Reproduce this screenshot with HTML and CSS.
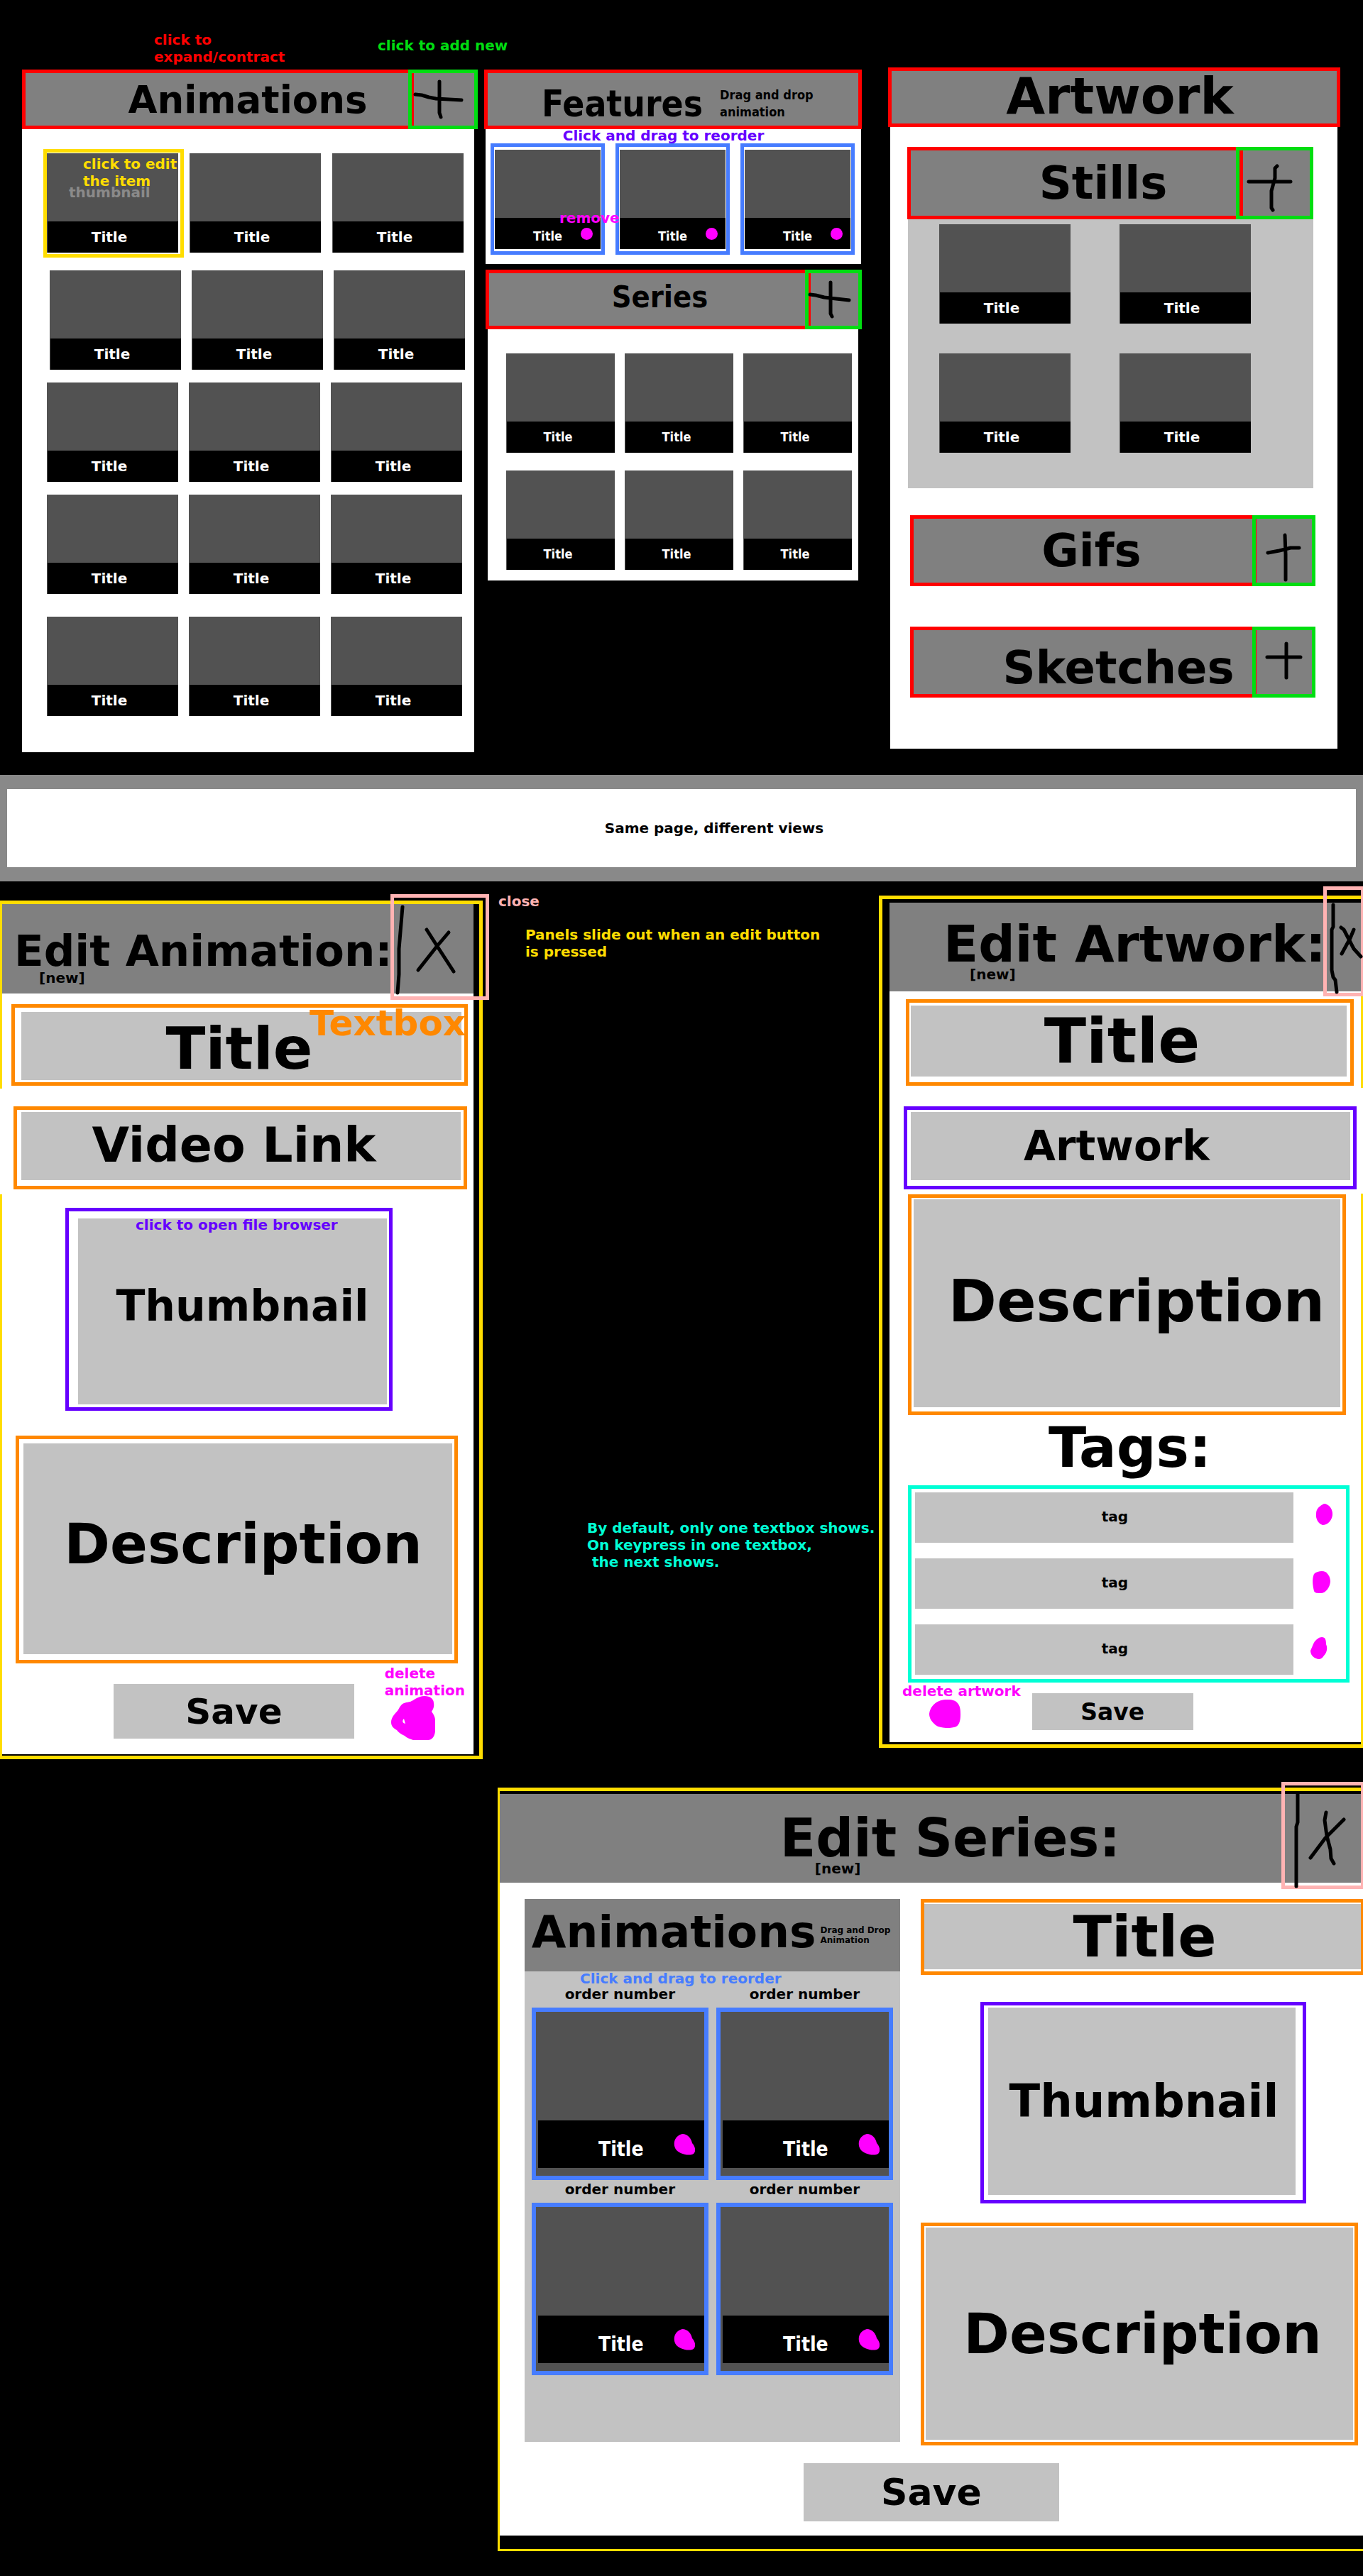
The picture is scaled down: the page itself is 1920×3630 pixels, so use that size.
FILE: index.html
```html
<!DOCTYPE html>
<html lang="en">
<head>
<meta charset="utf-8">
<title>Portfolio admin wireframe</title>
<link rel="stylesheet" href="styles.css">
</head>
<body>
<main>
  <section class="shelves">
    <div class="shelf shelf-animations">
      <p class="note note-expand">click to<br>expand/contract</p>
      <p class="note note-add">click to add new</p>
      <header class="bar">
        <h2 class="bar-heading"><button class="bar-title">Animations</button></h2>
        <button class="add" aria-label="Add animation"><svg class="ink"><path d="M39 12V56L41 62M5 30L14 31L24 34L34 36L70 38"/></svg></button>
      </header>
      <div class="shelf-body">
        <div class="row row-spread">
          <button class="card card-edit">
            <span class="thumb"></span><span class="name">Title</span>
            <span class="note note-thumb">thumbnail</span>
            <span class="note note-edit">click to edit<br>the item</span>
          </button>
          <button class="card"><span class="thumb"></span><span class="name">Title</span></button>
          <button class="card"><span class="thumb"></span><span class="name">Title</span></button>
        </div>
        <div class="row row-shift">
          <button class="card"><span class="thumb"></span><span class="name">Title</span></button>
          <button class="card"><span class="thumb"></span><span class="name">Title</span></button>
          <button class="card"><span class="thumb"></span><span class="name">Title</span></button>
        </div>
        <div class="row">
          <button class="card"><span class="thumb"></span><span class="name">Title</span></button>
          <button class="card"><span class="thumb"></span><span class="name">Title</span></button>
          <button class="card"><span class="thumb"></span><span class="name">Title</span></button>
        </div>
        <div class="row row-far">
          <button class="card"><span class="thumb"></span><span class="name">Title</span></button>
          <button class="card"><span class="thumb"></span><span class="name">Title</span></button>
          <button class="card"><span class="thumb"></span><span class="name">Title</span></button>
        </div>
        <div class="row row-last">
          <button class="card"><span class="thumb"></span><span class="name">Title</span></button>
          <button class="card"><span class="thumb"></span><span class="name">Title</span></button>
          <button class="card"><span class="thumb"></span><span class="name">Title</span></button>
        </div>
      </div>
    </div>

    <div class="shelf shelf-middle">
      <section>
        <h2 class="bar-heading"><button class="bar-title features-title"><span class="features-name">Features</span><span class="features-hint">Drag and drop<br>animation</span></button></h2>
        <div class="features-body">
          <p class="reorder">Click and drag to reorder</p>
          <div class="features-row">
            <div class="drag">
              <div class="card"><span class="thumb"></span><span class="name">Title</span></div>
              <button class="dot" aria-label="Remove"></button>
              <span class="note note-remove">remove</span>
            </div>
            <div class="drag">
              <div class="card"><span class="thumb"></span><span class="name">Title</span></div>
              <button class="dot" aria-label="Remove"></button>
            </div>
            <div class="drag">
              <div class="card"><span class="thumb"></span><span class="name">Title</span></div>
              <button class="dot" aria-label="Remove"></button>
            </div>
          </div>
        </div>
      </section>
      <section class="series">
        <header class="bar">
          <h2 class="bar-heading"><button class="bar-title series-title">Series</button></h2>
          <button class="add add-series" aria-label="Add series"><svg class="ink"><path d="M31 13V57L33 61M2 30L10 31L22 34L30 35L57 38"/></svg></button>
        </header>
        <div class="series-body">
          <button class="card"><span class="thumb"></span><span class="name">Title</span></button>
          <button class="card"><span class="thumb"></span><span class="name">Title</span></button>
          <button class="card"><span class="thumb"></span><span class="name">Title</span></button>
          <button class="card"><span class="thumb"></span><span class="name">Title</span></button>
          <button class="card"><span class="thumb"></span><span class="name">Title</span></button>
          <button class="card"><span class="thumb"></span><span class="name">Title</span></button>
        </div>
      </section>
    </div>

    <div class="shelf shelf-artwork">
      <h2 class="bar-heading"><button class="bar-title artwork-title">Artwork</button></h2>
      <div class="artwork-body">
        <section class="stills">
          <header class="bar">
            <h3 class="bar-heading"><button class="bar-title stills-title">Stills</button></h3>
            <button class="add add-stills" aria-label="Add still"><svg class="ink"><path d="M53 22L50 25V39L45 57V81L47 84M13 44H72"/></svg></button>
          </header>
          <div class="stills-body">
            <button class="card"><span class="thumb"></span><span class="name">Title</span></button>
            <button class="card"><span class="thumb"></span><span class="name">Title</span></button>
            <button class="card"><span class="thumb"></span><span class="name">Title</span></button>
            <button class="card"><span class="thumb"></span><span class="name">Title</span></button>
          </div>
        </section>
        <header class="bar bar-folded">
          <h3 class="bar-heading"><button class="bar-title gifs-title">Gifs</button></h3>
          <button class="add add-folded" aria-label="Add gif"><svg class="ink"><path d="M41 23L42 50V86M17 48L33 45L49 41H61"/></svg></button>
        </header>
        <header class="bar bar-folded">
          <h3 class="bar-heading"><button class="bar-title sketches-title">Sketches</button></h3>
          <button class="add add-folded" aria-label="Add sketch"><svg class="ink"><path d="M43 19V67M16 38H63"/></svg></button>
        </header>
      </div>
    </div>
  </section>

  <p class="divider">Same page, different views</p>

  <section class="editors">
    <form class="panel panel-animation">
      <header class="panel-head">
        <h2>Edit Animation:</h2>
        <p>[new]</p>
        <button type="button" class="close" aria-label="Close"><svg class="ink"><path d="M12 13L7 72V108L5 134M46 45L60 67L84 104M77 49L60 69L34 102"/></svg></button>
      </header>
      <div class="panel-body">
        <div class="field a-title"><input type="text" value="Title" aria-label="Title"><span class="note note-textbox">Textbox</span></div>
        <div class="field a-video"><input type="text" value="Video Link" aria-label="Video link"></div>
        <div class="field field-file a-thumb"><button type="button">Thumbnail</button><span class="note note-file">click to open file browser</span></div>
        <div class="field a-description"><textarea aria-label="Description">Description</textarea></div>
        <footer class="a-footer">
          <button type="button" class="save">Save</button>
          <button type="button" class="delete">delete<br>animation
            <svg width="62" height="62" viewBox="0 0 62 62"><path fill-rule="evenodd" d="M47 0C55 0 60 4 60 10C61 15 59 19 57 22C60 26 62 30 62 34V50C61 58 57 62 52 62H31C26 60 22 59 19 56C13 53 10 51 8 48C2 45 0 41 0 37C0 31 4 26 8 22C11 19 11 16 14 13C17 9 22 9 27 8C32 6 38 0 47 0ZM18 32C15 35 16 38 20 39Z"/></svg>
          </button>
        </footer>
      </div>
    </form>

    <div class="remarks">
      <p class="remark-close">close</p>
      <p class="remark-slide">Panels slide out when an edit button<br>is pressed</p>
      <p class="remark-tags">By default, only one textbox shows.<br>On keypress in one textbox,<br>&nbsp;the next shows.</p>
    </div>

    <form class="panel panel-artwork">
      <header class="panel-head">
        <h2>Edit Artwork:</h2>
        <p>[new]</p>
        <button type="button" class="close" aria-label="Close"><svg class="ink"><path d="M9 21V52L7 56V113L9 123L12 127L14 144M20 53L24 56L38 83L48 94M38 56L33 68L21 90"/></svg></button>
      </header>
      <div class="panel-body">
        <div class="field w-title"><input type="text" value="Title" aria-label="Title"></div>
        <div class="field field-file w-file"><button type="button">Artwork</button></div>
        <div class="field w-description"><textarea aria-label="Description">Description</textarea></div>
        <h3 class="tags-heading">Tags:</h3>
        <ul class="tags">
          <li><input type="text" value="tag" aria-label="Tag 1"><button type="button" aria-label="Delete tag 1"><svg width="74" height="71"><path d="M43 16C50 16 56 24 55 32C54 40 48 46 41 46C35 44 31 37 32 30C32 23 37 19 43 16Z"/></svg></button></li>
          <li><input type="text" value="tag" aria-label="Tag 2"><button type="button" aria-label="Delete tag 2"><svg width="74" height="71"><path d="M40 18C48 18 52 26 52 33C51 41 46 49 38 49C34 49 30 49 29 46C27 38 26 29 29 22C32 19 36 18 40 18Z"/></svg></button></li>
          <li><input type="text" value="tag" aria-label="Tag 3"><button type="button" aria-label="Delete tag 3"><svg width="74" height="71"><path d="M40 18C45 18 46 22 46 28C49 35 46 41 43 44C40 49 36 50 32 48C27 46 24 42 24 37C26 33 27 29 30 24C33 21 36 18 40 18Z"/></svg></button></li>
        </ul>
        <footer class="w-footer">
          <button type="button" class="delete">delete artwork
            <svg width="44" height="40" viewBox="0 0 44 40"><path d="M14 2C21-1 32-1 38 3C44 8 44 15 44 21C44 28 43 35 38 38C31 41 16 41 9 36C3 31 0 26 0 20C1 12 6 5 14 2Z"/></svg>
          </button>
          <button type="button" class="save">Save</button>
        </footer>
      </div>
    </form>
  </section>

  <form class="panel panel-series">
    <header class="panel-head">
      <h2>Edit Series:</h2>
      <p>[new]</p>
      <button type="button" class="close" aria-label="Close"><svg class="ink"><path d="M18 12V52L16 58V142M83 48L57 74L36 102M58 38L56 49L59 71L64 90L65 103L69 110"/></svg></button>
    </header>
    <div class="panel-body">
      <div class="series-columns">
        <section class="picker">
          <header class="picker-head">
            <h3>Animations</h3>
            <p>Drag and Drop<br>Animation</p>
          </header>
          <p class="picker-note">Click and drag to reorder</p>
          <div class="picker-grid">
            <figure>
              <figcaption>order number</figcaption>
              <div class="tile"><span class="tile-name">Title<button type="button" class="blob" aria-label="Remove"><svg width="30" height="30"><path d="M12 0C20 0 25 7 26 13C31 18 32 27 26 29C17 31 8 27 4 23C-2 16 0 3 12 0Z"/></svg></button></span></div>
            </figure>
            <figure>
              <figcaption>order number</figcaption>
              <div class="tile"><span class="tile-name">Title<button type="button" class="blob" aria-label="Remove"><svg width="30" height="30"><path d="M12 0C20 0 25 7 26 13C31 18 32 27 26 29C17 31 8 27 4 23C-2 16 0 3 12 0Z"/></svg></button></span></div>
            </figure>
            <figure>
              <figcaption>order number</figcaption>
              <div class="tile"><span class="tile-name">Title<button type="button" class="blob" aria-label="Remove"><svg width="30" height="30"><path d="M12 0C20 0 25 7 26 13C31 18 32 27 26 29C17 31 8 27 4 23C-2 16 0 3 12 0Z"/></svg></button></span></div>
            </figure>
            <figure>
              <figcaption>order number</figcaption>
              <div class="tile"><span class="tile-name">Title<button type="button" class="blob" aria-label="Remove"><svg width="30" height="30"><path d="M12 0C20 0 25 7 26 13C31 18 32 27 26 29C17 31 8 27 4 23C-2 16 0 3 12 0Z"/></svg></button></span></div>
            </figure>
          </div>
        </section>
        <div class="series-fields">
          <div class="field s-title"><input type="text" value="Title" aria-label="Title"></div>
          <div class="field field-file s-thumb"><button type="button">Thumbnail</button></div>
          <div class="field s-description"><textarea aria-label="Description">Description</textarea></div>
        </div>
      </div>
      <button type="button" class="save">Save</button>
    </div>
  </form>
</main>
</body>
</html>
```
FILE: styles.css
```css
:root {
  --red: #ff0000;
  --green: #00dd11;
  --yellow: #ffdd00;
  --orange: #ff8800;
  --purple: #6600ff;
  --blue: #467cff;
  --pink: #ffb3b3;
  --magenta: #ff00ff;
  --aqua: #00ffd5;
  --bar: #808080;
  --fill: #c2c2c2;
  --thumb: #525252;
  --condensed: "DejaVu Sans Condensed", "DejaVu Sans", sans-serif;
}

* { box-sizing: border-box; }

body {
  margin: 0;
  background: #000;
  color: #000;
  font: bold 20px/24px "DejaVu Sans", Verdana, sans-serif;
  overflow-x: hidden;
}

h2, h3, p, ul, figure { margin: 0; padding: 0; font-size: inherit; font-weight: bold; }
ul { list-style: none; }

button, input, textarea {
  display: block;
  margin: 0;
  padding: 0;
  border: 0;
  border-radius: 0;
  background: none;
  color: inherit;
  font: inherit;
}

svg { display: block; }

/* Hand-drawn strokes that lie over their button */
.ink {
  position: absolute;
  inset: 0;
  width: 100%;
  height: 100%;
  overflow: visible;
  fill: none;
  stroke: #000;
  stroke-width: 5;
  stroke-linecap: round;
  stroke-linejoin: round;
}

.note { position: absolute; z-index: 2; text-align: left; white-space: nowrap; }

/* Shelves */
.shelves {
  display: flex;
  align-items: flex-start;
  gap: 9px;
  padding: 95px 32px 32px 31px;
}
.shelf { position: relative; min-width: 0; }
.shelf-animations { flex: 642 1 0; margin-top: 3px; }
.shelf-middle { flex: 532 1 0; margin-top: 3px; }
.shelf-artwork { flex: 637 1 0; margin-left: 28px; }

.note-expand { left: 186px; top: -54px; color: var(--red); }
.note-add { left: 501px; top: -46px; color: var(--green); }

.bar { display: flex; background: var(--bar); }
.bar-heading { flex: 1; min-width: 0; }
.bar-title {
  width: 100%;
  height: 84px;
  border: 5px solid var(--red);
  background: var(--bar);
  font-size: 53px;
  line-height: 1;
  text-align: center;
}
.shelf-animations .bar-title { padding-left: 84px; }
.add {
  position: relative;
  flex: none;
  width: 98px;
  margin-left: -8px;
  border: 5px solid var(--green);
}

.shelf-body { margin-right: 5px; padding: 34px 17px 51px 35px; background: #fff; }
.row { display: grid; grid-template-columns: repeat(3, 1fr); gap: 15px; margin-bottom: 18px; }
.row-spread { gap: 16px; margin-right: -2px; margin-bottom: 25px; }
.row-shift { margin-left: 4px; margin-right: -4px; }
.row-far { margin-bottom: 32px; }
.row-last { margin-bottom: 0; }

.card { position: relative; display: block; color: #fff; text-align: center; }
.thumb { display: block; height: 96px; background: var(--thumb); }
.name {
  display: flex;
  align-items: center;
  justify-content: center;
  height: 44px;
  padding-right: 10px;
  border-left: 1px solid var(--thumb);
  background: #000;
}
.card-edit::after {
  content: "";
  position: absolute;
  inset: -6px -8px -7px -5px;
  border: 5px solid var(--yellow);
}
.note-edit { left: 51px; top: 3px; color: var(--yellow); }
.note-thumb { left: 31px; top: 43px; color: #8a8a8a; }

/* Features and series */
.features-title {
  display: flex;
  align-items: center;
  gap: 24px;
  padding: 12px 0 0 76px;
  font-family: var(--condensed);
  text-align: left;
}
.features-name { font-size: 51px; }
.features-hint { font-size: 18px; line-height: 24px; }
.features-body { margin: 0 1px 0 2px; padding: 0 9px 13px 7px; background: #fff; }
.reorder { padding: 0 26px 2px 0; color: var(--purple); line-height: 18px; text-align: center; }
.features-row { display: grid; grid-template-columns: repeat(3, 1fr); gap: 15px; }
.drag { position: relative; padding: 4px 1px 3px; border: 5px solid var(--blue); }
.drag .name { padding: 8px 0 0; border-left: 0; font: bold 18px/24px var(--condensed); }
.dot {
  position: absolute;
  right: 12px;
  bottom: 16px;
  width: 17px;
  height: 17px;
  border-radius: 50%;
  background: var(--magenta);
}
.note-remove { left: 92px; top: 88px; color: var(--magenta); }

.series { margin: 8px 0 0 2px; }
.series-title { padding: 0 0 8px 33px; font: bold 43px/1 var(--condensed); }
.add-series { width: 80px; }
.series-body {
  display: grid;
  grid-template-columns: repeat(3, 1fr);
  gap: 25px 14px;
  margin: 0 5px 0 3px;
  padding: 34px 9px 15px 26px;
  background: #fff;
}
.series-body .name { padding-right: 8px; font: bold 18px/24px var(--condensed); }

/* Artwork */
.artwork-title { padding: 0 0 4px 16px; font-size: 71px; }
.artwork-body { margin: 0 4px 0 3px; padding: 28px 31px 72px 28px; background: #fff; }
.stills { margin: 0 3px 0 -4px; }
.stills-title { height: 102px; padding-left: 79px; font-size: 64px; }
.add-stills { width: 109px; margin-left: -10px; }
.stills-body {
  display: grid;
  grid-template-columns: 1fr 1fr;
  gap: 42px 69px;
  margin-left: 1px;
  padding: 7px 88px 50px 44px;
  background: var(--fill);
}
.bar-folded { margin-top: 38px; }
.bar-folded + .bar-folded { margin-top: 57px; }
.bar-folded .bar-title { height: 100px; font-size: 64px; }
.bar-folded .gifs-title { padding-left: 23px; }
.bar-folded .sketches-title { padding: 15px 0 0 99px; }
.add-folded { width: 89px; margin-left: -6px; }

.divider {
  padding: 43px 0 43px 92px;
  border: solid #898989;
  border-width: 20px 10px;
  background: #fff;
  text-align: center;
}

/* Edit panels */
.editors { display: grid; grid-template-columns: 680fr 558fr 682fr; align-items: start; }
.panel { position: relative; min-width: 0; border: 5px solid var(--yellow); }
.panel-head { padding-bottom: 14px; background: var(--bar); white-space: nowrap; }
.panel-head p { line-height: 20px; }
.panel-head h2 { line-height: 66px; }
.panel-body { background: #fff; }
.close { position: absolute; z-index: 2; border: 5px solid var(--pink); }

.field { position: relative; border: 5px solid var(--orange); }
.field-file { border-color: var(--purple); }
.field input, .field textarea, .field button {
  width: 100%;
  background: var(--fill);
  line-height: 1;
  text-align: center;
}
.field textarea { resize: none; overflow: hidden; }
.save { background: var(--fill); line-height: 1; text-align: center; }
.delete { color: var(--magenta); text-align: left; white-space: nowrap; }
.delete svg, .tags svg, .blob svg { fill: var(--magenta); }

.panel-animation { margin-top: 27px; border-left-width: 3px; padding: 0 8px 2px 0; }
.panel-animation::after, .panel-artwork::after {
  content: "";
  position: absolute;
  top: 260px;
  left: -3px;
  width: 3px;
  height: 149px;
  background: #fff;
}
.panel-animation .panel-head { padding-top: 38px; padding-bottom: 12px; }
.panel-animation h2 { padding-left: 17px; font-size: 61px; line-height: 56px; }
.panel-animation .panel-head p { padding-left: 52px; }
.panel-animation .close { top: -14px; right: -14px; width: 139px; height: 149px; }
.panel-animation .panel-body { padding-top: 15px; }

.a-title { margin: 0 8px 29px 13px; padding: 6px 4px 3px 9px; }
.a-title input { height: 96px; padding: 7px 6px 0 0; font-size: 82px; }
.note-textbox { right: -2px; top: -3px; color: var(--orange); font-size: 50px; line-height: 50px; }
.a-video { margin: 0 9px 26px 16px; padding: 3px 4px 8px 6px; }
.a-video input { height: 96px; padding: 0 20px 3px 0; font-size: 68px; }
.a-thumb { margin: 0 114px 35px 89px; padding: 10px 3px 4px 13px; }
.a-thumb button { height: 262px; padding: 0 0 16px 28px; font-size: 60px; }
.note-file { left: 94px; top: 7px; color: var(--purple); }
.a-description { margin: 0 22px 0 19px; padding: 6px 3px 8px 6px; }
.a-description textarea { height: 297px; padding: 103px 0 0 15px; font-size: 78px; }
.a-footer { display: flex; align-items: flex-start; padding: 2px 12px 20px 157px; }
.a-footer .save { width: 339px; height: 77px; margin-top: 27px; font-size: 50px; }
.a-footer .delete { margin-left: auto; }
.a-footer svg { margin: -4px 0 0 9px; }

.remarks { min-width: 0; padding: 16px 0 0 22px; white-space: nowrap; }
.remark-close { color: var(--pink); }
.remark-slide { padding: 23px 0 0 38px; color: var(--yellow); }
.remark-tags { padding: 788px 0 0 125px; color: var(--aqua); }

.panel-artwork { margin-top: 20px; border-right-width: 3px; padding: 5px 0 3px 10px; }
.panel-artwork::after { left: auto; right: -3px; top: 266px; }
.panel-artwork .panel-head { padding-top: 25px; }
.panel-artwork h2 { padding-left: 76px; font-size: 72px; }
.panel-artwork .panel-head p { padding-left: 113px; }
.panel-artwork .close { top: -18px; right: -3px; width: 56px; height: 155px; border-right-width: 3px; }
.panel-artwork .panel-body { padding-top: 11px; }

.w-title { margin: 0 10px 29px 23px; padding: 4px 5px 8px 2px; }
.w-title input { height: 100px; padding-right: 19px; font-size: 87px; }
.w-file { margin: 0 6px 7px 20px; padding: 3px 4px 8px 5px; }
.w-file button { height: 96px; padding-right: 39px; font-size: 58px; }
.w-description { margin: 0 21px 0 26px; padding: 2px 3px 6px; }
.w-description textarea { height: 293px; padding: 103px 0 0 27px; font-size: 82px; }
.tags-heading { padding: 0 0 7px 13px; font-size: 78px; line-height: 92px; text-align: center; }
.tags {
  display: flex;
  flex-direction: column;
  gap: 22px;
  margin: 0 16px 0 26px;
  padding: 5px 0 6px 5px;
  border: 5px solid var(--aqua);
}
.tags li { display: flex; }
.tags input { flex: 1; min-width: 0; height: 71px; padding: 0 0 3px 30px; background: var(--fill); text-align: center; }
.w-footer { display: flex; align-items: flex-start; gap: 16px; padding: 0 0 17px 18px; }
.w-footer .save { width: 227px; height: 52px; margin-top: 15px; font-size: 33px; }
.w-footer svg { margin-left: 38px; }

.panel-series { margin: 40px 0 35px 36.5%; border-width: 5px 0 3px 3px; padding: 4px 0 19px; }
.panel-series .panel-head { padding: 29px 0 10px; }
.panel-series h2 { padding-left: 395px; font-size: 74px; }
.panel-series .panel-head p { padding-left: 444px; }
.panel-series .close { top: -13px; right: 0; width: 115px; height: 151px; border-right-width: 3px; }
.panel-series .panel-body { padding: 23px 0 20px; }
.series-columns { display: grid; grid-template-columns: 529fr 623fr; align-items: start; gap: 29px; padding-left: 35px; }

.picker { padding-bottom: 94px; background: var(--fill); }
.picker-head { display: flex; align-items: center; gap: 6px; height: 102px; padding: 0 0 10px 10px; background: var(--bar); white-space: nowrap; }
.picker-head h3 { font-size: 63px; line-height: 1; }
.picker-head p { padding-top: 10px; font-size: 12px; line-height: 14px; }
.picker-note { padding-right: 89px; color: var(--blue); line-height: 20px; text-align: center; }
.picker-grid { display: grid; grid-template-columns: 1fr 1fr; gap: 1px 11px; padding: 0 10px; }
.picker-grid figcaption { margin-bottom: 7px; text-align: center; }
.tile { padding: 153px 0 11px 3px; border: 6px solid var(--blue); background: var(--thumb); }
.tile-name {
  position: relative;
  display: block;
  height: 67px;
  padding-top: 29px;
  background: #000;
  color: #fff;
  font: bold 28px/24px var(--condensed);
  text-align: center;
}
.blob { position: absolute; top: 19px; right: 13px; }

.s-title { padding: 2px 0 3px; border-right-width: 3px; }
.s-title input { height: 92px; padding-left: 6px; font-size: 80px; }
.s-thumb { margin: 38px 80px 27px 84px; padding: 3px 10px 7px 6px; }
.s-thumb button { height: 264px; padding-left: 6px; font-size: 64px; }
.s-description { margin-right: 7px; padding: 2px 2px 3px; }
.s-description textarea { height: 299px; padding: 111px 0 0 9px; font-size: 78px; }
.panel-series .save { width: 360px; height: 82px; margin: 25px auto 0; font-size: 52px; }
```
